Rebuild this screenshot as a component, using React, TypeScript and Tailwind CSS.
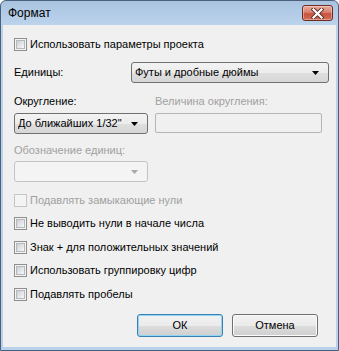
import React from "react"

function CheckBox({ label, disabled }: { label: string; disabled?: boolean }) {
  return (
    <div className="flex h-[13px] items-center">
      <span
        className={`flex h-[13px] w-[13px] shrink-0 items-center justify-center border ${
          disabled ? "border-[#c5c5c5] bg-[#f4f4f4]" : "border-[#8e8f8f] bg-[#f4f4f4]"
        }`}
      >
        {!disabled && (
          <span className="h-[9px] w-[9px] border border-[#b5b9bd] bg-gradient-to-br from-[#cdd1d6] to-[#f7f7f7]"></span>
        )}
      </span>
      <span className={`ml-[3px] leading-[13px] ${disabled ? "text-[#a0a0a0]" : "text-black"}`}>{label}</span>
    </div>
  )
}

function Arrow({ color }: { color: string }) {
  return (
    <svg width="7" height="4" viewBox="0 0 7 4" className="shrink-0">
      <path d="M0 0H7L3.5 4Z" fill={color} />
    </svg>
  )
}

function Combo({ value, width, disabled }: { value?: string; width: string; disabled?: boolean }) {
  return (
    <div
      className={`flex h-[21px] ${width} items-center rounded-[3px] border pl-[3px] pr-[9px] ${
        disabled
          ? "border-[#c2c5c8] bg-[#f4f4f4]"
          : "border-[#707070] bg-[linear-gradient(#f3f3f3_0%,#ececec_50%,#dfdfdf_51%,#d6d6d6_100%)]"
      }`}
    >
      <span className="flex-1 truncate leading-[13px]">{value}</span>
      <Arrow color={disabled ? "#a8a8a8" : "#000"} />
    </div>
  )
}

function Btn({ label, isDefault }: { label: string; isDefault?: boolean }) {
  return (
    <button
      className={`flex h-[23px] w-[86px] items-center justify-center rounded-[3px] border leading-[13px] text-black bg-[linear-gradient(#f2f2f2_0%,#ebebeb_50%,#dddddd_51%,#cfcfcf_100%)] ${
        isDefault
          ? "border-[#3c7fb1] shadow-[inset_0_0_0_1px_#8fd6f6]"
          : "border-[#707070] shadow-[inset_0_0_0_1px_#fbfbfb]"
      }`}
    >
      {label}
    </button>
  )
}

export default function App() {
  return (
    <div className="h-[351px] w-[339px] font-['Liberation_Sans',Arial,sans-serif] text-[11px] text-black">
      <div className="flex h-full w-full flex-col rounded-t-[6px] border border-[#48607c] bg-[linear-gradient(#a9c3e0_0px,#bcd3ec_24px,#b9d1ea_100%)] px-[2px] pb-[3px]">
        {/* title bar */}
        <div className="flex h-[24px] shrink-0 items-start">
          <span className="ml-[5px] mt-[5px] text-[12px] leading-[15px] text-black">Формат</span>
          <div className="ml-auto mr-[3px] mt-[4px] flex h-[16px] w-[31px] items-center justify-center rounded-[3px] border border-[#6e2b24] bg-[linear-gradient(#e9a99a_0%,#d98271_45%,#c8523f_55%,#d36e55_100%)] shadow-[inset_0_0_0_1px_rgba(255,255,255,0.35)]">
            <svg width="13" height="11" viewBox="0 0 13 11">
              <path d="M2.5 1.5L10.5 9.5M10.5 1.5L2.5 9.5" stroke="#5a2a24" strokeWidth="4" strokeLinecap="square" />
              <path d="M2.5 1.5L10.5 9.5M10.5 1.5L2.5 9.5" stroke="#fff" strokeWidth="2.2" strokeLinecap="square" />
            </svg>
          </div>
        </div>

        {/* client */}
        <div className="flex flex-1 flex-col bg-[#f0f0f0] pl-[11px]">
          <div className="mt-[13px]">
            <CheckBox label="Использовать параметры проекта" />
          </div>

          <div className="mt-[11px] flex items-center">
            <span className="w-[117px] leading-[13px]">Единицы:</span>
            <Combo value="Футы и дробные дюймы" width="w-[198px]" />
          </div>

          <div className="mt-[12px] flex gap-[7px]">
            <div className="flex w-[134px] flex-col">
              <span className="leading-[13px]">Округление:</span>
              <div className="mt-[5px]">
                <Combo value={'До ближайших 1/32"'} width="w-[134px]" />
              </div>
            </div>
            <div className="flex w-[167px] flex-col">
              <span className="leading-[13px] text-[#a0a0a0]">Величина округления:</span>
              <div className="mt-[5px] h-[20px] w-[167px] rounded-[2px] border border-[#b5b5b5] bg-[#f0f0f0]"></div>
            </div>
          </div>

          <span className="mt-[10px] leading-[13px] text-[#a0a0a0]">Обозначение единиц:</span>
          <div className="mt-[4px]">
            <Combo width="w-[134px]" disabled />
          </div>

          <div className="mt-[12px] flex flex-col">
            <CheckBox label="Подавлять замыкающие нули" disabled />
            <div className="mt-[10px]">
              <CheckBox label="Не выводить нули в начале числа" />
            </div>
            <div className="mt-[11px]">
              <CheckBox label="Знак + для положительных значений" />
            </div>
            <div className="mt-[10px]">
              <CheckBox label="Использовать группировку цифр" />
            </div>
            <div className="mt-[11px]">
              <CheckBox label="Подавлять пробелы" />
            </div>
          </div>

          <div className="mt-[13px] flex justify-end gap-[9px] pr-[18px]">
            <Btn label="ОК" isDefault />
            <Btn label="Отмена" />
          </div>
        </div>
      </div>
    </div>
  )
}
